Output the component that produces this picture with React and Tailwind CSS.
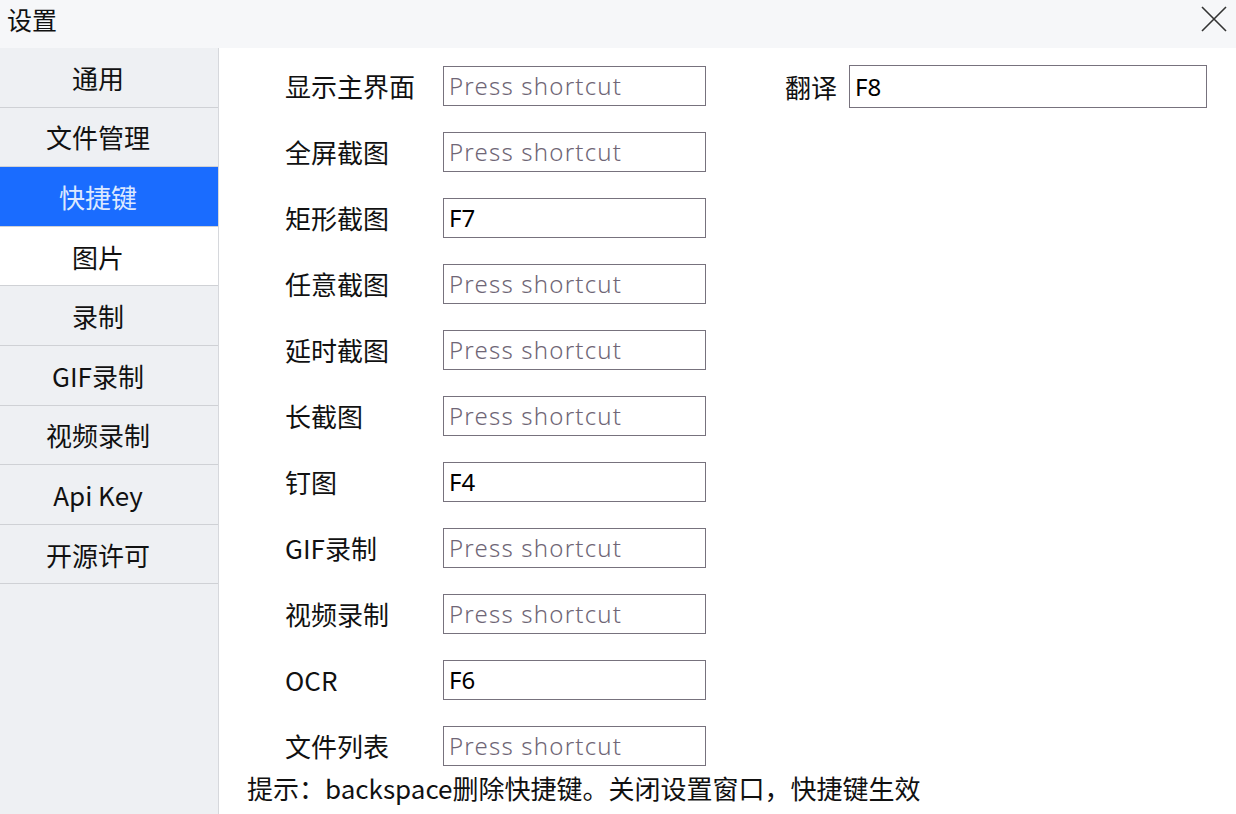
import { useState } from "react";

const menu = ["通用", "文件管理", "快捷键", "图片", "录制", "GIF录制", "视频录制", "Api Key", "开源许可"];

const rows = [
  { label: "显示主界面", value: "" },
  { label: "全屏截图", value: "" },
  { label: "矩形截图", value: "F7" },
  { label: "任意截图", value: "" },
  { label: "延时截图", value: "" },
  { label: "长截图", value: "" },
  { label: "钉图", value: "F4" },
  { label: "GIF录制", value: "" },
  { label: "视频录制", value: "" },
  { label: "OCR", value: "F6" },
  { label: "文件列表", value: "" },
];

const cjk = { fontFamily: '"Noto Sans CJK SC", "Noto Sans", sans-serif' };
const latin = { fontFamily: '"Noto Sans", "Noto Sans CJK SC", sans-serif' };

const ShortcutBox = ({ value, className }) => (
  <div
    className={`h-[40px] border border-[#77727d] bg-white flex items-center px-[5px] text-[24px] ${className}`}
    style={latin}
  >
    {value ? (
      <span className="text-black">{value}</span>
    ) : (
      <span className="text-[#6f6676] tracking-[1.2px] font-light">Press shortcut</span>
    )}
  </div>
);

export default function App() {
  const [active, setActive] = useState(2);

  return (
    <div className="w-[1236px] h-[814px] bg-white flex flex-col overflow-hidden text-[#111]" style={cjk}>
      {/* title bar */}
      <div className="h-[48px] bg-[#f6f7f9] flex items-center justify-between pl-[7px] pr-[8px]">
        <span className="text-[25px] leading-none -mt-[10px]">设置</span>
        <svg width="28" height="28" viewBox="0 0 28 28" className="-mt-[10px]">
          <path d="M2 2 L26 26 M26 2 L2 26" stroke="#333" strokeWidth="1.6" fill="none" />
        </svg>
      </div>

      <div className="flex flex-1 min-h-0">
        {/* sidebar */}
        <div className="w-[219px] bg-[#eef0f3] border-r border-[#d6d8dc] flex flex-col">
          {menu.map((m, i) => (
            <div
              key={m}
              onClick={() => setActive(i)}
              className={`h-[59.6px] shrink-0 flex items-center justify-center pr-[22px] text-[26px] border-b border-[#cfd1d5] cursor-pointer ${
                i === active
                  ? "bg-[#1a6cff] text-[#dce8ff]"
                  : i === active + 1
                  ? "bg-white"
                  : "bg-[#eef0f3]"
              }`}
            >
              {m}
            </div>
          ))}
        </div>

        {/* content */}
        <div className="flex-1 flex flex-col pt-[18px]">
          <div className="flex">
            <div className="flex flex-col gap-[26px] pl-[66px]">
              {rows.map((r) => (
                <div key={r.label} className="flex items-center">
                  <span className="w-[158px] text-[26px] leading-none">{r.label}</span>
                  <ShortcutBox value={r.value} className="w-[263px]" />
                </div>
              ))}
            </div>
            <div className="flex items-start ml-[79px] -mt-[1px]">
              <span className="w-[64px] h-[43px] flex items-center text-[26px] leading-none">翻译</span>
              <ShortcutBox value="F8" className="w-[358px] !h-[43px]" />
            </div>
          </div>
          <div className="pl-[28px] mt-[6px] text-[26px] leading-[32px]">
            提示：backspace删除快捷键。关闭设置窗口，快捷键生效
          </div>
        </div>
      </div>
    </div>
  );
}
